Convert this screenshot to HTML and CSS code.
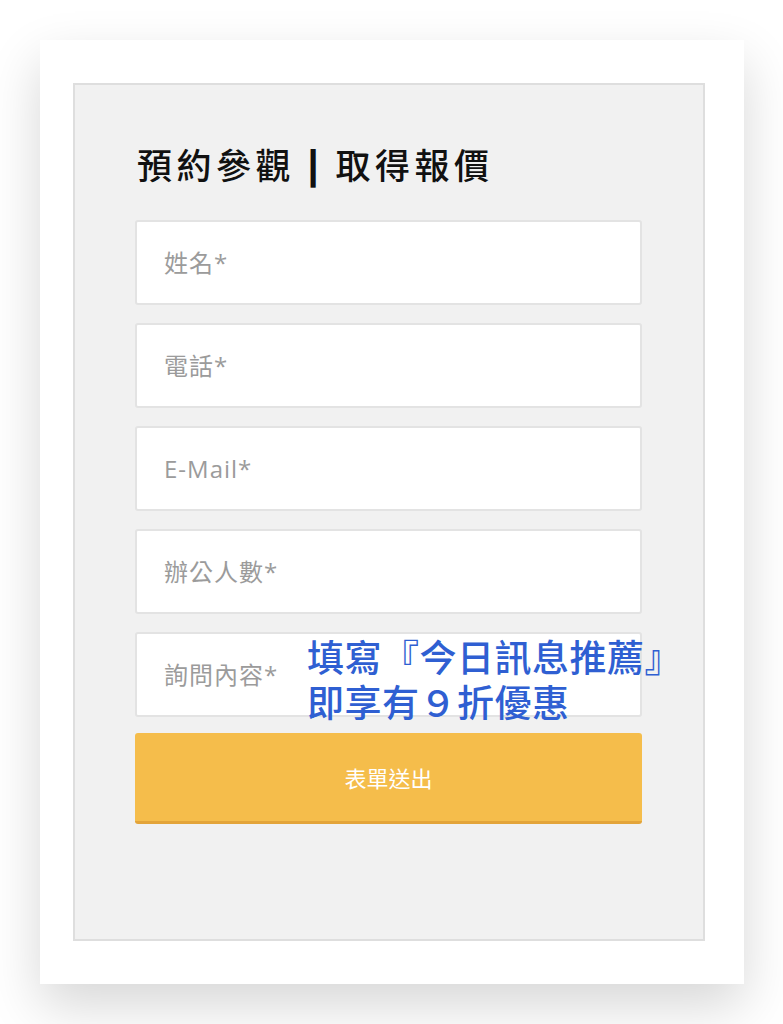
FILE: index.html
```html
<!DOCTYPE html>
<html lang="zh-Hant">
<head>
  <meta charset="UTF-8">
  <meta name="viewport" content="width=device-width, initial-scale=1.0">
  <title>預約參觀</title>
  <link rel="stylesheet" href="styles.css">
</head>
<body>
  <div class="card">
    <div class="form-box">
      <h2 class="form-title">預約參觀 <span class="divider">|</span> 取得報價</h2>
      <form class="form">
        <input class="field" type="text" placeholder="姓名*">
        <input class="field" type="tel" placeholder="電話*">
        <input class="field" type="email" placeholder="E-Mail*">
        <input class="field" type="text" placeholder="辦公人數*">
        <input class="field" type="text" placeholder="詢問內容*">
        <button class="submit-btn" type="button">表單送出</button>
      </form>
      <p class="promo-note">填寫『今日訊息推薦』<br>即享有９折優惠</p>
    </div>
  </div>
</body>
</html>
```

FILE: styles.css
```css
body {
  margin: 0;
  min-height: 1024px;
  background-color: #ffffff;
  font-family: "Noto Sans CJK TC", "Noto Sans", sans-serif;
}
.card {
  width: 704px;
  height: 944px;
  margin: 40px 0 0 40px;
  padding: 43px 39px 0 33px;
  box-sizing: border-box;
  background-color: #fff;
  box-shadow: 0 22px 50px rgba(0, 0, 0, 0.16);
}
.form-box {
  position: relative;
  height: 858px;
  box-sizing: border-box;
  padding: 57px 61px 0 60px;
  background-color: #f1f1f1;
  border: 2px solid #dedede;
}
.form-title {
  height: 43px;
  margin: 0 0 35px 2px;
  font-size: 35px;
  line-height: 43px;
  font-weight: 500;
  letter-spacing: 4.5px;
  color: #111;
}
.divider {
  display: inline-block;
  font-family: "Liberation Sans", sans-serif;
  font-weight: 700;
  font-size: 40px;
  line-height: 43px;
  vertical-align: top;
  margin-top: 2px;
}
.form {
  display: flex;
  flex-direction: column;
}
.field {
  height: 85px;
  margin-bottom: 18px;
  padding: 0 0 0 27px;
  box-sizing: border-box;
  border: 2px solid #e3e3e3;
  border-radius: 3px;
  background: #fff;
  font-family: "Open Sans", "Noto Sans CJK TC", sans-serif;
  font-size: 24px;
  letter-spacing: 1px;
  color: #333;
  outline: none;
}
.field::placeholder {
  color: #9b9b9b;
}
.field:last-of-type {
  margin-bottom: 16px;
}
.submit-btn {
  height: 91px;
  border: none;
  border-bottom: 3px solid #e3a43a;
  border-radius: 3px;
  background-color: #f5bd4b;
  color: #fff;
  font-family: "Noto Sans CJK TC", "Noto Sans", sans-serif;
  font-size: 22px;
  cursor: pointer;
}
.promo-note {
  position: absolute;
  left: 232px;
  top: 549px;
  margin: 0;
  font-size: 37px;
  line-height: 45px;
  font-weight: 500;
  letter-spacing: 0.5px;
  color: #2f5fd2;
  white-space: nowrap;
}
```
